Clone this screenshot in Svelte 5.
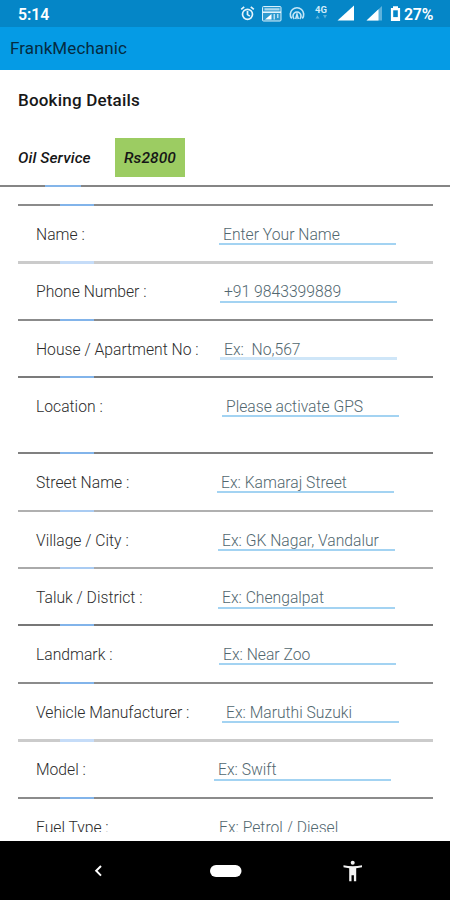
<script>
  const GREY = "#8b8b8b";
  const BLUE = "#82b4ea";

  // height: distance to the next divider, x: left edge of the input
  const fields = [
    { label: "Name :", hint: "Enter Your Name", height: 57, x: 219, under: 41, line: 2 },
    { label: "Phone Number :", hint: "+91 9843399889", height: 58, x: 220, under: 42, line: 3, grey: "#cbcbcb", blue: "#c5dcf8" },
    { label: "House / Apartment No :", hint: "Ex:  No,567", height: 57, x: 220, under: 41, line: 2, thick: true },
    { label: "Location :", hint: "Please activate GPS", height: 76, x: 222, under: 41, line: 2, grey: "#7b7b7b" },
    { label: "Street Name :", hint: "Ex: Kamaraj Street", height: 58, x: 217, under: 41, line: 2, grey: "#808080" },
    { label: "Village / City :", hint: "Ex: GK Nagar, Vandalur", height: 57, x: 218, under: 41, line: 2, grey: "#b0b0b0", blue: "#a9cbf2" },
    { label: "Taluk / District :", hint: "Ex: Chengalpat", height: 57, x: 218, under: 42, line: 2, grey: "#aaaaaa", blue: "#a9cbf2" },
    { label: "Landmark :", hint: "Ex: Near Zoo", height: 58, x: 219, under: 41, line: 2, grey: "#777777" },
    { label: "Vehicle Manufacturer :", hint: "Ex: Maruthi Suzuki", height: 57, x: 222, under: 41, line: 2 },
    { label: "Model :", hint: "Ex: Swift", height: 58, x: 214, under: 42, line: 3, grey: "#cbcbcb", blue: "#c5dcf8" },
    { label: "Fuel Type :", hint: "Ex: Petrol / Diesel", height: 60, x: 215, under: 41, line: 2 },
  ];
</script>

<div class="screen">
  <header class="status">
    <span class="time">5:14</span>
    <svg class="icons" width="164" height="20" viewBox="240 4 164 20" aria-hidden="true">
      <g fill="none" stroke="#e4f4fc" stroke-width="1.7">
        <circle cx="247.5" cy="14.3" r="5" />
        <path d="M247.5 11v3.6l2.4 1.5M241.2 9.4l3-2.6M253.8 9.4l-3-2.6" />
      </g>
      <rect x="262.5" y="6.5" width="18.5" height="14.5" rx="1" fill="#2f9bd0" stroke="#d7effb" />
      <path d="M263 12.2h18" stroke="#eef9ff" stroke-width="1.5" />
      <path d="M264.5 9.3h15" stroke="#a9d8ef" stroke-width="2.2" />
      <path d="M265 19.5l6.5-5.5v5.5z" fill="#fff" />
      <path d="M273.5 19.5v-5.5h1.5v5.5zM277 14h1.5v4h-1.5z" fill="#b7def1" />
      <g fill="none" stroke="#c5e6f7" stroke-width="1.6">
        <path d="M291.7 18.5a6.7 6.7 0 1 1 10.6 0" />
        <path d="M294.3 19a4 4 0 1 1 5.4 0" />
        <path d="M295.7 19l1.3-4.5 1.3 4.5" />
      </g>
      <text x="315" y="12.6" class="net">4G</text>
      <path d="M315.5 18.5l2-3 2 3zM323 15h4l-2 3.5z" fill="#58afd9" />
      <path d="M337.5 20.5h16.5v-15z" fill="#fff" />
      <path d="M366.5 20.5h15.5v-14.5z" fill="#5eb2dc" />
      <path d="M366.5 20.5h12v-11.2z" fill="#fff" />
      <path d="M393 6.2h5v1.7h2.1v13h-9.2v-13h2.1z" fill="#fff" />
      <path d="M393.2 10.3h4.6v6.8h-4.6z" fill="#0787c8" />
    </svg>
    <span class="battery">27%</span>
  </header>

  <div class="appbar">FrankMechanic</div>

  <main>
    <h1>Booking Details</h1>
    <div class="service">
      <span class="service-name">Oil Service</span>
      <span class="price">Rs2800</span>
    </div>
    <div class="rule"></div>

    <div class="form">
      {#each fields as f}
        <div class="row" style:height="{f.height}px">
          <div
            class="line"
            style:height="{f.line}px"
            style:--grey={f.grey ?? GREY}
            style:--blue={f.blue ?? BLUE}
          ></div>
          <div class="field">
            <span class="label">{f.label}</span>
            <span
              class="hint"
              class:thick={f.thick}
              style:margin-left="{f.x - 36}px"
              style:height="{f.under}px"
            >{f.hint}</span>
          </div>
        </div>
      {/each}
    </div>
  </main>

  <nav>
    <svg width="450" height="59" viewBox="0 841 450 59" aria-hidden="true">
      <path d="M101 866l-4.8 4.8 4.8 4.8" fill="none" stroke="#fff" stroke-width="2" />
      <rect x="210" y="865" width="31.5" height="12" rx="6" fill="#fff" />
      <g fill="#f4f4f4">
        <circle cx="352.7" cy="862.8" r="2" />
        <path d="M343.5 865.3c6 1.2 12.5 1.2 18.5 0v2l-5.8 1v13h-2.3v-6h-2.4v6h-2.3v-13l-5.7-1z" />
      </g>
    </svg>
  </nav>
</div>

<style>
  :global(body) {
    margin: 0;
  }

  .screen {
    width: 450px;
    height: 900px;
    display: flex;
    flex-direction: column;
    overflow: hidden;
    background: #fff;
    font-family: Roboto, sans-serif;
  }

  .status {
    height: 27px;
    flex: none;
    display: flex;
    align-items: center;
    background: #0586c7;
    color: #fff;
    font-size: 15.8px;
    font-weight: 600;
  }

  .time {
    width: 222px;
    padding: 2px 0 0 18px;
  }

  .icons {
    flex: none;
    display: block;
  }

  .net {
    fill: #d2ecf9;
    font-size: 9.5px;
    font-weight: 700;
  }

  .battery {
    padding-top: 2px;
    letter-spacing: -0.2px;
  }

  .appbar {
    height: 43px;
    flex: none;
    padding-left: 10px;
    box-sizing: border-box;
    background: #059be5;
    color: #052b41;
    font-size: 17px;
    line-height: 43px;
    letter-spacing: 0.1px;
  }

  main {
    height: 762px;
    flex: none;
    overflow: hidden;
  }

  h1 {
    margin: 0;
    padding: 19px 0 1px 18px;
    font-size: 17px;
    font-weight: 500;
    line-height: 22px;
    letter-spacing: 0.2px;
    color: #181818;
  }

  .service {
    display: flex;
    align-items: center;
    padding: 26px 0 0 18px;
    height: 39px;
    font-size: 15.5px;
    font-style: italic;
    font-weight: 500;
    letter-spacing: 0.1px;
    color: #161616;
  }

  .service-name {
    width: 97px;
  }

  .price {
    width: 70px;
    height: 39px;
    line-height: 41px;
    text-align: center;
    background: #9ccc62;
  }

  .rule {
    height: 2px;
    margin-top: 8px;
    background: linear-gradient(90deg, #858585 45px, #84b5e9 45px 81px, #858585 81px);
  }

  .form {
    margin: 17px 17px 0 18px;
  }

  .row {
    display: grid;
    grid-template: 100% / 100%;
  }

  .line,
  .field {
    grid-area: 1 / 1;
    align-self: start;
  }

  .line {
    background: linear-gradient(
      90deg,
      var(--grey) 42px,
      var(--blue) 42px 76px,
      var(--grey) 76px
    );
  }

  .field {
    display: grid;
    padding-left: 18px;
    font-size: 15.7px;
    font-weight: 340;
    line-height: 20px;
    white-space: pre;
  }

  .label,
  .hint {
    grid-area: 1 / 1;
    padding-top: 21px;
  }

  .label {
    color: #2c2c2c;
  }

  .hint {
    width: 177px;
    box-sizing: border-box;
    padding-left: 4px;
    border-bottom: 2px solid #a3d3f2;
    color: #51676f;
  }

  .hint.thick {
    border-bottom: 3px solid #cfe6f8;
  }

  nav {
    height: 59px;
    margin-top: 9px;
    background: #000;
    flex: none;
  }

  nav svg {
    display: block;
  }
</style>
